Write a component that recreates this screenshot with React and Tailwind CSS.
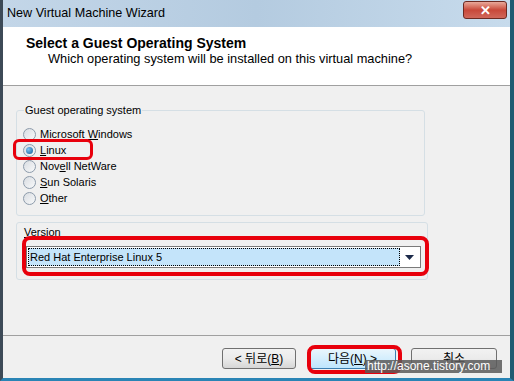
const ui = { fontFamily: '"Liberation Sans", "Noto Sans CJK KR", sans-serif' }

function Radio({ label, u, checked }) {
  const i = label.indexOf(u)
  return (
    <div className="flex items-center h-[16px] gap-[4px]">
      <span className="w-[13px] h-[13px] rounded-full border border-[#8d9bab] bg-gradient-to-br from-[#d9dde2] to-[#f8f9fa] flex items-center justify-center">
        {checked && <span className="w-[7px] h-[7px] rounded-full bg-[radial-gradient(circle_at_35%_35%,#7fc4f2,#0f5a97)]" />}
      </span>
      <span className="text-[11px] text-black">
        {label.slice(0, i)}<span className="underline">{u}</span>{label.slice(i + 1)}
      </span>
    </div>
  )
}

function Button({ children, className = '' }) {
  return (
    <div className={`h-[21px] rounded-[3px] border flex items-center justify-center text-[12px] text-black ${className}`}>
      {children}
    </div>
  )
}

export default function App() {
  return (
    <div style={ui} className="w-[514px] h-[381px] bg-[#bcd0e3] relative overflow-hidden">
      {/* frame */}
      <div className="h-full flex flex-col border-l-[3px] border-l-[#3d4a57] border-r-[4px] border-r-[#1f5b72] border-b-[3px] border-b-[#2a84b5]">
        {/* title bar */}
        <div className="h-[27px] shrink-0 flex items-center pl-[4px] bg-gradient-to-r from-[#c3d6e8] via-[#b4cbe0] to-[#c7dbec] relative">
          <span className="text-[12.6px] text-black">New Virtual Machine Wizard</span>
          <div className="absolute right-[3px] top-[1px] w-[44px] h-[18px] rounded-[3px] border border-[#6d2a22] bg-gradient-to-b from-[#e8a89a] via-[#c8483a] to-[#d0675a] flex items-center justify-center">
            <span className="text-white font-bold text-[13px] leading-none">✕</span>
          </div>
        </div>
        {/* header */}
        <div className="h-[59px] shrink-0 bg-white border-b border-b-[#a0a0a0] pl-[23px] pt-[8px]">
          <div className="text-[14px] font-bold text-black leading-[16px]">Select a Guest Operating System</div>
          <div className="text-[12.8px] text-black pl-[22px] leading-[15px]">Which operating system will be installed on this virtual machine?</div>
        </div>
        {/* body */}
        <div className="flex-1 bg-[#f0f0f0] flex flex-col">
          <div className="flex-1 pl-[13px] pt-[24px]">
            <div className="relative w-[409px] h-[106px] border border-[#d5dfe5] rounded-[3px]">
              <span className="absolute left-[7px] -top-[8px] bg-[#f0f0f0] px-[1px] text-[11px] text-black leading-[14px]">Guest operating system</span>
              <div className="pl-[6px] pt-[15px] flex flex-col">
                <Radio label="Microsoft Windows" u="W" />
                <Radio label="Linux" u="L" checked />
                <Radio label="Novell NetWare" u="e" />
                <Radio label="Sun Solaris" u="S" />
                <Radio label="Other" u="O" />
              </div>
              <div className="absolute left-[-4px] top-[28px] w-[80px] h-[21px] rounded-[6px] border-[3px] border-[#e8000c]" />
            </div>
            <div className="relative w-[412px] h-[58px] mt-[6px] border border-[#d5dfe5] rounded-[3px]">
              <span className="absolute left-[7px] top-[2px] text-[11px] text-black leading-[14px]"><span className="underline">V</span>ersion</span>
              <div className="absolute left-[9px] top-[23px] w-[395px] h-[22px] border border-[#7a7a7a] bg-white flex items-center p-[1px]">
                <div className="flex-1 h-full bg-[#c4e4fa] border border-dotted border-black flex items-center pl-[1px] text-[11px] text-black">Red Hat Enterprise Linux 5</div>
                <div className="w-[19px] flex items-center justify-center">
                  <svg width="9" height="5" viewBox="0 0 9 5"><path d="M0 0h9L4.5 5z" fill="#1c2a4a" /></svg>
                </div>
              </div>
              <div className="absolute left-[5px] top-[13px] w-[407px] h-[40px] rounded-[8px] border-[4px] border-[#e8000c]" />
            </div>
          </div>
          <div className="h-[43px] shrink-0 border-t border-t-[#a0a0a0] relative flex items-start justify-end pt-[12px] pr-[13px]">
            <Button className="w-[74px] border-[#707070] bg-gradient-to-b from-[#f2f2f2] via-[#ebebeb] to-[#d6d6d6]">&lt; 뒤로(<span className="underline">B</span>)</Button>
            <Button className="w-[87px] ml-[13px] border-[#3c7fb1] bg-gradient-to-b from-[#eaf6fd] to-[#bee6fd]">다음(<span className="underline">N</span>) &gt;</Button>
            <Button className="w-[86px] ml-[15px] border-[#707070] bg-gradient-to-b from-[#f2f2f2] via-[#ebebeb] to-[#d6d6d6]">취소</Button>
            <div className="absolute left-[304px] top-[9px] w-[95px] h-[29px] rounded-[8px] border-[4px] border-[#e8000c]" />
            <div className="absolute left-[362px] top-[24px] w-[137px] h-[13px] bg-[#5a5a5a]/85 text-white text-[12px] leading-[13px] pl-[2px]">http://asone.tistory.com</div>
          </div>
        </div>
      </div>
    </div>
  )
}
